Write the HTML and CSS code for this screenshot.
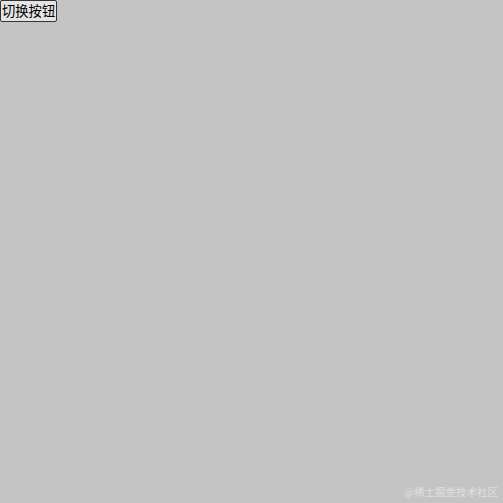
FILE: index.html
```html
<!DOCTYPE html>
<html lang="zh">
<head>
<meta charset="utf-8">
<link rel="stylesheet" href="styles.css">
</head>
<body>
<button class="toggle">切换按钮</button>
<div class="watermark">@稀土掘金技术社区</div>
</body>
</html>
```
FILE: styles.css
```css
html, body {
  margin: 0;
  padding: 0;
  height: 100%;
}
body {
  background: #c4c4c4;
  font-family: "Noto Sans CJK SC", sans-serif;
  position: relative;
}
.toggle {
  display: block;
  margin: 0;
  padding: 1px 1px;
  font-family: "Noto Sans CJK SC", sans-serif;
  font-size: 13.3px;
  line-height: 18px;
  color: #000;
  background: #e4e4e4;
  border: 1px solid #333;
  border-radius: 2px;
}
.watermark {
  position: absolute;
  right: 5px;
  bottom: 4px;
  font-size: 10.5px;
  color: #e0e0e0;
  font-family: "Noto Sans CJK SC", sans-serif;
}
```
